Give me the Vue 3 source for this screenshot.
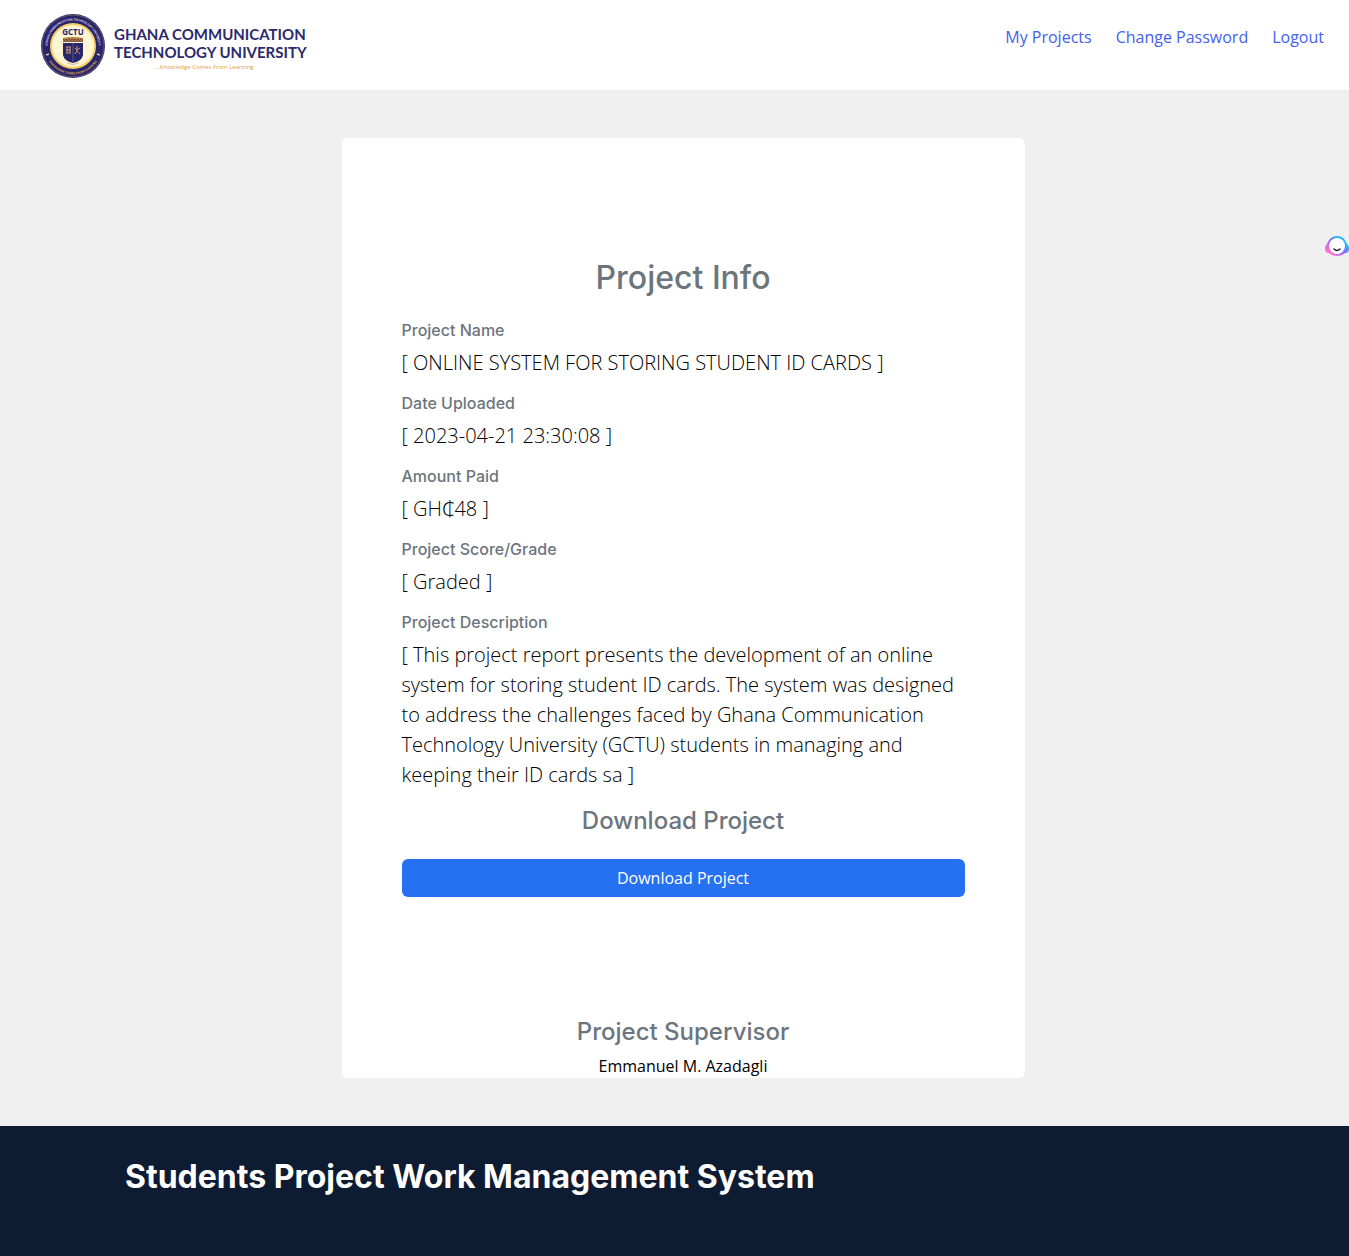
<script setup>
const links = ['My Projects', 'Change Password', 'Logout']

const details = [
  { label: 'Project Name', value: 'ONLINE SYSTEM FOR STORING STUDENT ID CARDS' },
  { label: 'Date Uploaded', value: '2023-04-21 23:30:08' },
  { label: 'Amount Paid', value: 'GH₵48' },
  { label: 'Project Score/Grade', value: 'Graded' },
  {
    label: 'Project Description',
    value:
      'This project report presents the development of an online system for storing student ID cards. The system was designed to address the challenges faced by Ghana Communication Technology University (GCTU) students in managing and keeping their ID cards sa',
  },
]
</script>

<template>
  <div class="page">
    <header class="header">
      <a class="brand" href="#">
        <svg class="seal" viewBox="0 0 64 64" aria-hidden="true">
          <defs>
            <path id="arc-top" d="M6.8 36a25.5 25.5 0 1 1 50.4 0" />
            <path id="arc-bottom" d="M6.2 44a28.5 28.5 0 0 0 51.6 0" />
          </defs>
          <circle cx="32" cy="32" r="32" fill="#29256b" />
          <circle cx="32" cy="32" r="31" fill="none" stroke="#8d7a70" stroke-width="0.6" />
          <circle cx="32" cy="32" r="22" fill="#fbf5d3" stroke="#f6cf62" stroke-width="2" />
          <text class="ring"><textPath href="#arc-top" startOffset="50%" text-anchor="middle">GHANA COMMUNICATION TECHNOLOGY UNIVERSITY</textPath></text>
          <text class="ring gold"><textPath href="#arc-bottom" startOffset="50%" text-anchor="middle">KNOWLEDGE COMES FROM LEARNING</textPath></text>
          <path d="M5 41l3-1M56 40l3 1" stroke="#d9c48f" stroke-width="1.5" />
          <text class="initials" x="32" y="21" text-anchor="middle">GCTU</text>
          <path d="M22 24q10-2 20 0v4H22z" fill="#b7803f" />
          <path d="M22 25l3 3l3-3l3 3l3-3l3 3l3-3l2 2M22 28l3-3l3 3l3-3l3 3l3-3l3 3l2-2" fill="none" stroke="#4b3550" stroke-width="0.7" />
          <path d="M22 29h20v12q-1 6-10 8q-9-2-10-8z" fill="#29256b" />
          <path d="M25 33h5M25 36h5M26 33v6M29 33v6M25 39h5M36 32v3M34 34l2 2l3-2M36 35v2l-2 3M36 37l3 3" fill="none" stroke="#c99a70" />
          <path d="M32 29v19" stroke="#7d719a" stroke-width="0.7" />
          <path d="M26 49q6 3 12 0" fill="none" stroke="#d4bd93" />
        </svg>
        <span class="brand-text">
          <span class="brand-name">GHANA COMMUNICATION<br />TECHNOLOGY UNIVERSITY</span>
          <span class="motto">...Knowledge Comes From Learning</span>
        </span>
      </a>
      <nav class="nav">
        <a v-for="link in links" :key="link" href="#">{{ link }}</a>
      </nav>
    </header>

    <main class="main">
      <article class="card">
        <section class="info">
          <h2>Project Info</h2>
          <dl>
            <template v-for="item in details" :key="item.label">
              <dt>{{ item.label }}</dt>
              <dd>[ {{ item.value }} ]</dd>
            </template>
          </dl>
          <h4>Download Project</h4>
          <button class="download" type="button">Download Project</button>
        </section>
        <section class="supervisor">
          <h4>Project Supervisor</h4>
          <p>Emmanuel M. Azadagli</p>
        </section>
      </article>
    </main>

    <footer class="footer">
      <h2>Students Project Work Management System</h2>
    </footer>

    <button class="assistant" type="button" aria-label="Open assistant">
      <svg viewBox="0 0 24 20" aria-hidden="true">
        <defs>
          <linearGradient id="halo" x1="0" y1="1" x2="1" y2="0">
            <stop offset="0.2" stop-color="#ff70cf" />
            <stop offset="0.5" stop-color="#8468ff" />
            <stop offset="0.75" stop-color="#20bdf5" />
            <stop offset="1" stop-color="#4078ff" />
          </linearGradient>
        </defs>
        <path d="M12 0c5 0 8 3 10 8c2 2 3 5 1 8c-1 1-2 1-3 1c-4 4-12 4-16 0c-1 0-2 0-3-1c-2-3-1-6 1-8c2-5 5-8 10-8z" fill="url(#halo)" />
        <circle cx="12" cy="10" r="8" fill="#fff" />
        <path d="M9 13q3 3 6 0" fill="none" stroke="#171923" stroke-width="1.5" stroke-linecap="round" />
      </svg>
    </button>
  </div>
</template>

<style>
body {
  margin: 0;
}
</style>

<style scoped>
.page {
  min-height: 100vh;
  display: flex;
  flex-direction: column;
  background: #f0f0f0;
  color: #000;
  font-family: "Open Sans", "Noto Sans", sans-serif;
  font-size: 16px;
  line-height: 24px;
}

h2,
h4,
p,
dl,
dd {
  margin: 0;
}

h2,
h4,
dt {
  font-family: Inter, sans-serif;
  font-weight: 500;
  color: #6c757d;
}

.header {
  display: flex;
  justify-content: space-between;
  align-items: flex-start;
  box-sizing: border-box;
  min-height: 90px;
  padding: 14px 25px 12px 41px;
  background: #fff;
}

.brand {
  display: flex;
  gap: 9px;
  text-decoration: none;
  color: #2b2a6c;
}

.seal {
  width: 64px;
  height: 64px;
}

.ring {
  font: 700 3px "Open Sans", sans-serif;
  fill: #d8d0e6;
}

.ring.gold {
  fill: #dba44f;
}

.initials {
  font: 700 8px "Open Sans", sans-serif;
  fill: #29256b;
}

.brand-text {
  display: flex;
  flex-direction: column;
  padding-top: 11px;
}

.brand-name {
  font: 700 15px/18px Lato, sans-serif;
}

.motto {
  padding-right: 12px;
  font: 400 6px/12px "Open Sans", sans-serif;
  text-align: center;
  color: #dda03c;
}

.nav {
  display: flex;
  gap: 24px;
  padding-top: 11px;
}

.nav a {
  color: #4361ee;
  text-decoration: none;
}

.main {
  padding: 48px 0 48px 17px;
}

.card {
  max-width: 683px;
  margin: 0 auto;
  border-radius: 6px;
  background: #fff;
}

.info {
  padding: 120px 60px;
}

.info h2 {
  margin-bottom: 24px;
  font-size: 32px;
  line-height: 39px;
  text-align: center;
}

dt {
  margin-bottom: 8px;
  line-height: 19px;
}

dd {
  margin-bottom: 16px;
  font-size: 20px;
  font-weight: 300;
  line-height: 30px;
}

h4 {
  font-size: 24px;
  line-height: 29px;
  text-align: center;
}

.download {
  display: block;
  width: 100%;
  margin-top: 24px;
  padding: 7px 12px;
  border: 0;
  border-radius: 6px;
  background: #2670f2;
  color: #fff;
  font: inherit;
}

.supervisor {
  text-align: center;
}

.supervisor h4 {
  margin-bottom: 8px;
}

.footer {
  flex: 1;
  padding: 32px 125px;
  background: #0d1c33;
}

.footer h2 {
  color: #fff;
  font-size: 32px;
  font-weight: 700;
  line-height: 38px;
}

.assistant {
  position: absolute;
  top: 236px;
  right: 0;
  width: 24px;
  height: 20px;
  padding: 0;
  border: 0;
  background: none;
}

.assistant svg {
  display: block;
  width: 100%;
  height: 100%;
}
</style>
